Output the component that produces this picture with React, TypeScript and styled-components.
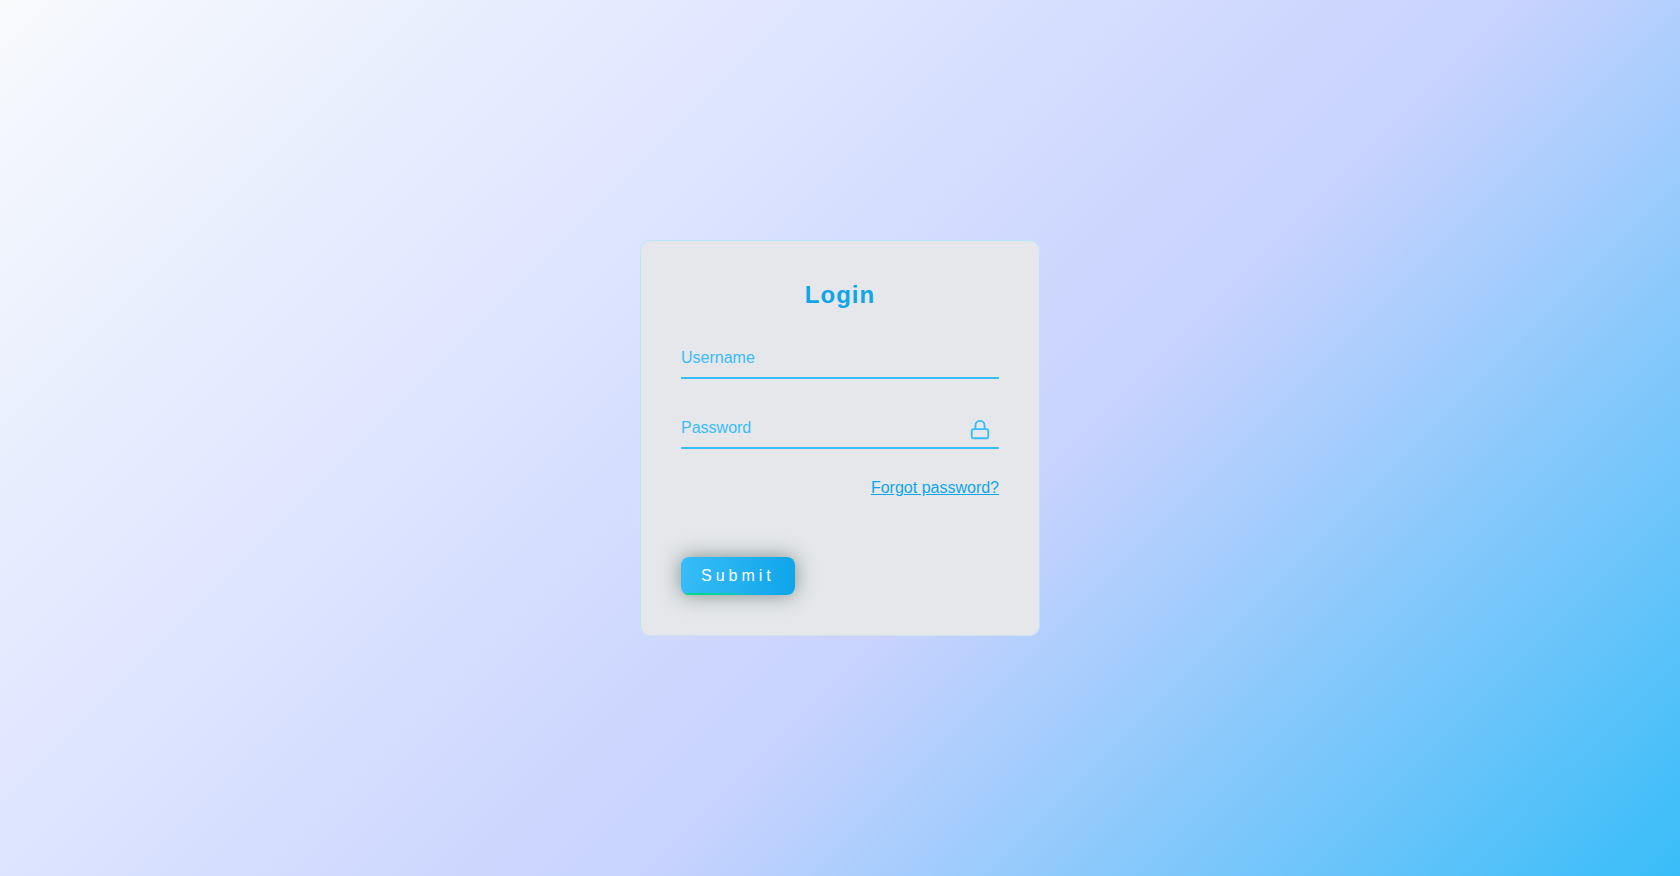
import React from "react";
import styled, { createGlobalStyle } from "styled-components";

const GlobalStyle = createGlobalStyle`
  *, *::before, *::after { box-sizing: border-box; }
  body {
    margin: 0;
    font-family: "Liberation Sans", Arial, sans-serif;
    font-size: 16px;
  }
`;

const Page = styled.main`
  min-height: 100vh;
  display: flex;
  align-items: center;
  justify-content: center;
  background: linear-gradient(135deg, #f8fafc 0%, #e0e7ff 30%, #c7d2fe 60%, #38bdf8 100%);
`;

const Card = styled.form`
  width: 100%;
  max-width: 400px;
  padding: 40px;
  border: 1px solid #bae6fd;
  border-bottom-color: #d0e4ee;
  border-radius: 10px;
  background: #e5e7eb;
`;

const Title = styled.h1`
  margin: 0 0 30px;
  font-size: 24px;
  line-height: 28px;
  letter-spacing: 1px;
  text-align: center;
  color: #0ea5e9;
`;

const Field = styled.div`
  position: relative;
  margin-bottom: 30px;
`;

const Input = styled.input`
  display: block;
  width: 100%;
  height: 40px;
  padding: 10px 0;
  border: 0;
  border-bottom: 2px solid #38bdf8;
  border-radius: 0;
  outline: none;
  background: transparent;
  font: inherit;
  color: #0ea5e9;

  &::placeholder {
    color: #38bdf8;
    opacity: 1;
  }
`;

const FieldIcon = styled.svg`
  position: absolute;
  top: 10px;
  right: 8px;
  width: 22px;
  height: 22px;
  pointer-events: none;
`;

const LinkRow = styled.div`
  display: flex;
  justify-content: flex-end;
  margin-bottom: 60px;
  line-height: 18px;
`;

const ForgotLink = styled.a`
  color: #0ea5e9;
  text-decoration: underline;
`;

const SubmitButton = styled.button`
  position: relative;
  display: block;
  overflow: hidden;
  padding: 10px 20px;
  border: 0;
  border-radius: 8px;
  background: linear-gradient(100deg, #38bdf8, #0ea5e9);
  box-shadow: 0 0 20px rgba(30, 60, 40, 0.5);
  font: inherit;
  line-height: 18px;
  letter-spacing: 4px;
  color: #ffffff;
  cursor: pointer;

  &::after {
    content: "";
    position: absolute;
    left: 0;
    bottom: 0;
    width: 100%;
    height: 2px;
    background: linear-gradient(90deg, #00d890 20%, transparent 70%);
  }
`;

const LockIcon = () => (
  <FieldIcon viewBox="0 0 24 24" fill="none" stroke="#38bdf8" strokeWidth="2" aria-hidden="true">
    <rect x="3" y="11" width="18" height="10" rx="2" />
    <path d="M7 11V7a5 5 0 0 1 10 0v4" />
  </FieldIcon>
);

export default function App() {
  return (
    <>
      <GlobalStyle />
      <Page>
        <Card onSubmit={(event: React.FormEvent) => event.preventDefault()}>
          <Title>Login</Title>
          <Field>
            <Input type="text" name="username" placeholder="Username" aria-label="Username" />
          </Field>
          <Field>
            <Input type="password" name="password" placeholder="Password" aria-label="Password" />
            <LockIcon />
          </Field>
          <LinkRow>
            <ForgotLink href="#forgot">Forgot password?</ForgotLink>
          </LinkRow>
          <SubmitButton type="submit">Submit</SubmitButton>
        </Card>
      </Page>
    </>
  );
}
